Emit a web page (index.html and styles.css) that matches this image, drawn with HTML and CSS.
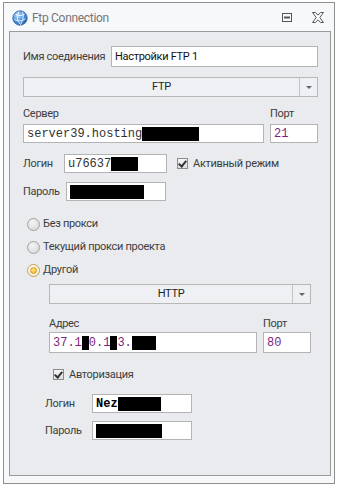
FILE: index.html
```html
<!DOCTYPE html>
<html lang="ru">

<head>
    <meta charset="UTF-8">
    <title>Ftp Connection</title>
    <link rel="stylesheet" href="styles.css">
</head>

<body>
    <div class="window">
        <div class="titlebar">
            <svg class="app-icon" width="16" height="16" viewBox="0 0 16 16">
                <defs>
                    <radialGradient id="globe" cx="0.35" cy="0.3" r="0.8">
                        <stop offset="0" stop-color="#bfe0fb" />
                        <stop offset="0.5" stop-color="#4f95de" />
                        <stop offset="1" stop-color="#1d5aa8" />
                    </radialGradient>
                </defs>
                <circle cx="8" cy="8" r="7.2" fill="url(#globe)" stroke="#2c5f9e" stroke-width="0.8" />
                <path d="M4 4.5 C7 6 9 6 12.5 4.2 M2.5 9.5 C6 11.5 10 11.5 13.5 8.5 M7 1.5 C4.5 6 5 11 8.5 14.5 M10.5 2 C12 6 11 10.5 8.5 14.5" fill="none" stroke="#eaf4ff" stroke-width="1" />
            </svg>
            <span class="title">Ftp Connection</span>
            <span class="title-buttons">
                <svg width="10" height="9" viewBox="0 0 10 9">
                    <rect x="0.5" y="0.5" width="9" height="8" fill="none" stroke="#555" />
                    <rect x="2" y="3.5" width="6" height="2" fill="#555" />
                </svg>
                <svg width="12" height="11" viewBox="0 0 12 11">
                    <path d="M0.5 0.5 H3.5 L6 3.2 L8.5 0.5 H11.5 L7.8 5.5 L11.5 10.5 H8.5 L6 7.8 L3.5 10.5 H0.5 L4.2 5.5 Z" fill="#fff" stroke="#555" stroke-width="1" stroke-linejoin="round" />
                </svg>
            </span>
        </div>

        <div class="panel">
            <div class="row name-row">
                <span class="label name-label">Имя соединения</span>
                <div class="field grow">Настройки FTP 1</div>
            </div>

            <div class="combo main-combo">
                <span class="combo-text">FTP</span>
                <span class="combo-btn"><i class="arrow"></i></span>
            </div>

            <div class="row caption-row">
                <span class="label grow">Сервер</span>
                <span class="label port-col">Порт</span>
            </div>
            <div class="row server-row">
                <div class="field mono grow">server39.hosting<span class="redact" style="width: 57px"></span></div>
                <div class="field mono purple port-col">21</div>
            </div>

            <div class="row login-row">
                <span class="label login-label">Логин</span>
                <div class="field mono short-field">u76637<span class="redact" style="width: 27px"></span></div>
                <label class="check active-check"><i class="box"></i>Активный режим</label>
            </div>
            <div class="row pass-row">
                <span class="label pass-label">Пароль</span>
                <div class="field mono pass-field"><span class="redact" style="width: 74px"></span></div>
            </div>

            <div class="radios">
                <label class="radio"><i class="dot"></i>Без прокси</label>
                <label class="radio"><i class="dot"></i>Текущий прокси проекта</label>
                <label class="radio"><i class="dot on"></i>Другой</label>
            </div>

            <div class="proxy">
                <div class="combo">
                    <span class="combo-text">HTTP</span>
                    <span class="combo-btn"><i class="arrow"></i></span>
                </div>
                <div class="row caption-row proxy-caption">
                    <span class="label grow">Адрес</span>
                    <span class="label port-col">Порт</span>
                </div>
                <div class="row address-row">
                    <div class="field mono purple grow">37.1<span class="redact" style="width: 7px"></span>0.1<span class="redact" style="width: 7px"></span>3.<span class="redact" style="width: 24px"></span></div>
                    <div class="field mono purple port-col">80</div>
                </div>
                <label class="check auth-check"><i class="box"></i>Авторизация</label>
            </div>

            <div class="auth">
                <div class="row auth-login">
                    <span class="label auth-label">Логин</span>
                    <div class="field mono dark auth-field">Nez<span class="redact" style="width: 43px"></span></div>
                </div>
                <div class="row auth-pass">
                    <span class="label auth-label">Пароль</span>
                    <div class="field mono auth-field"><span class="redact" style="width: 66px"></span></div>
                </div>
            </div>
        </div>
    </div>
</body>

</html>
```

FILE: styles.css
```css
* {
    box-sizing: border-box;
}

body {
    margin: 0;
    background-color: #ffffff;
    font-family: Roboto, "Liberation Sans", Arial, sans-serif;
    font-size: 11px;
    letter-spacing: -0.3px;
    color: #3d3d3d;
}

.window {
    margin: 2px 0 0 3px;
    width: 332px;
    height: 482px;
    border: 1px solid #8f8f8f;
    background-color: #f7f8fa;
}

.titlebar {
    height: 28px;
    display: flex;
    align-items: center;
    padding: 1px 10px 0 8px;
}

.app-icon {
    margin-right: 4px;
}

.title {
    font-size: 12px;
    color: #767676;
    flex: 1;
}

.title-buttons {
    display: flex;
    align-items: center;
    gap: 20px;
}

.panel {
    margin: 0 3px 0 5px;
    height: 445px;
    border: 1px solid #9a9a9a;
    background-color: #e9ebef;
    padding: 14px 12px 0 13px;
}

.row {
    display: flex;
    align-items: center;
}

.grow {
    flex: 1;
}

.label {
    line-height: 14px;
    white-space: nowrap;
}

.field {
    height: 21px;
    border: 1px solid #b4b4b4;
    background-color: #ffffff;
    color: #111;
    padding: 0 3px;
    display: flex;
    align-items: center;
    white-space: nowrap;
}

.mono {
    font-family: "Liberation Mono", "Courier New", monospace;
    font-size: 12px;
    letter-spacing: 0;
    color: #333;
}

.purple {
    color: #7d1f7d;
}

.dark {
    color: #000;
    font-weight: bold;
}

.redact {
    display: inline-block;
    height: 14px;
    background-color: #000;
}

.name-label {
    width: 88px;
}

.combo {
    height: 20px;
    border: 1px solid #b8b8b8;
    background-color: #eef0f3;
    display: flex;
}

.main-combo {
    margin-top: 10px;
}

.combo-text {
    flex: 1;
    text-align: center;
    line-height: 18px;
    color: #222;
}

.combo-btn {
    width: 18px;
    border-left: 1px solid #c4c4c4;
    display: flex;
    align-items: center;
    justify-content: center;
}

.arrow {
    width: 0;
    height: 0;
    border-left: 3px solid transparent;
    border-right: 3px solid transparent;
    border-top: 3px solid #666;
}

.caption-row {
    margin-top: 10px;
}

.port-col {
    width: 48px;
    margin-left: 6px;
}

.server-row {
    margin-top: 3px;
}

.server-row .field,
.login-row .field,
.pass-row .field,
.auth .field {
    height: 19px;
}

.login-row {
    margin-top: 11px;
}

.login-label {
    width: 41px;
}

.short-field {
    width: 103px;
}

.pass-row {
    margin-top: 9px;
}

.pass-label {
    width: 43px;
}

.pass-field {
    width: 100px;
}

.check {
    display: flex;
    align-items: center;
    white-space: nowrap;
}

.box {
    width: 11px;
    height: 11px;
    border: 1px solid #8c8c8c;
    background: linear-gradient(#f6f6f6, #dedede);
    margin-right: 5px;
    position: relative;
}

.box::after {
    content: "";
    position: absolute;
    left: 2px;
    top: 0;
    width: 3px;
    height: 6px;
    border-right: 2px solid #333;
    border-bottom: 2px solid #333;
    transform: rotate(40deg);
}

.active-check {
    margin-left: 10px;
}

.radios {
    margin-top: 16px;
    margin-left: 4px;
    display: flex;
    flex-direction: column;
    gap: 9px;
}

.radio {
    display: flex;
    align-items: center;
    line-height: 14px;
}

.dot {
    width: 13px;
    height: 13px;
    border-radius: 50%;
    border: 1px solid #a2a2a2;
    background: radial-gradient(circle at 40% 35%, #f4f4f4, #d4d4d4);
    margin-right: 3px;
    display: flex;
    align-items: center;
    justify-content: center;
}

.dot.on {
    border-color: #c9a04a;
    background: radial-gradient(circle at 40% 35%, #ffffff, #e6e6e6);
}

.dot.on::after {
    content: "";
    width: 5px;
    height: 5px;
    border-radius: 50%;
    background: radial-gradient(circle at 40% 35%, #ffe680, #f0b020);
    border: 1px solid #d49a1c;
}

.proxy {
    margin: 7px 7px 0 26px;
}

.proxy-caption {
    margin-top: 13px;
}

.address-row {
    margin-top: 1px;
}

.auth-check {
    margin: 15px 0 0 4px;
}

.auth {
    margin-left: 22px;
}

.auth-login {
    margin-top: 13px;
}

.auth-pass {
    margin-top: 8px;
}

.auth-label {
    width: 47px;
}

.auth-field {
    width: 100px;
}
```
